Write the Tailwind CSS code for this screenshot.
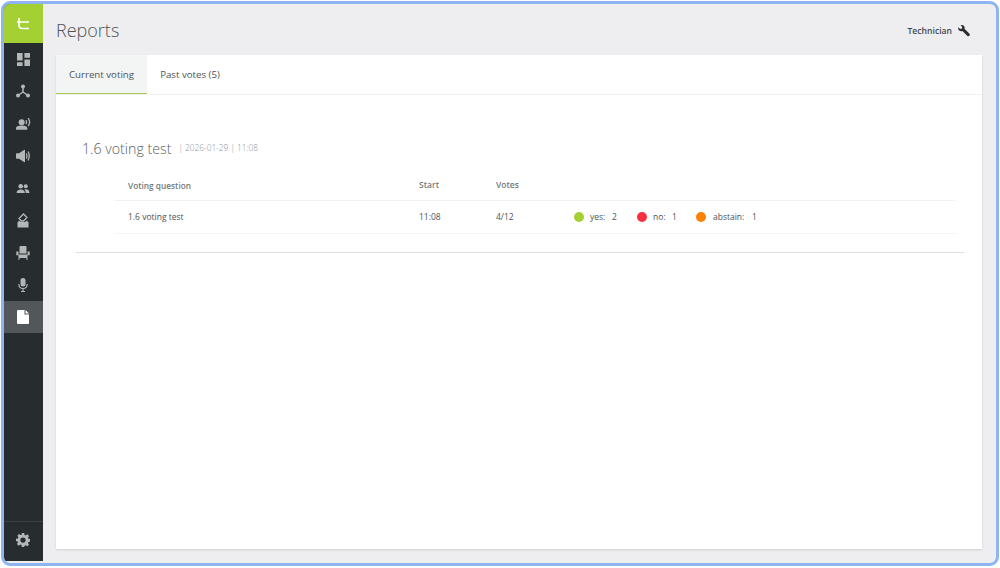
<!DOCTYPE html>
<html lang="en">
<head>
    <meta charset="UTF-8">
    <title>Reports</title>
    <script src="https://cdn.jsdelivr.net/npm/@tailwindcss/browser@4"></script>
</head>
<body class="bg-white font-['Open_Sans',sans-serif]">
    <div class="w-[1000px] h-[568px] pl-px pr-px pt-px pb-[2px] overflow-hidden">
        <div class="w-full h-full flex border-[3px] border-[#8fb4f2] rounded-[9px] overflow-hidden bg-[#eeeef0]">
            <!-- Sidebar -->
            <aside class="w-[39px] shrink-0 mb-[2px] bg-[#272c2f] flex flex-col">
                <div class="h-[39px] pr-px bg-[#a5d034] flex items-center justify-center">
                    <svg class="w-[14px] h-[12px]" viewBox="0 0 14 12" fill="none" stroke="#fff" stroke-width="1.700"><path d="M3 0v7q0 3.500 3.500 3.500H13M1 4h12"/></svg>
                </div>
                <nav class="flex flex-col text-[#b4b7b8]">
                    <div class="h-[32.25px] pr-px flex items-center justify-center">
                        <svg class="w-[13px] h-[13px]" viewBox="0 0 14 14" fill="currentColor"><path d="M0 0h6v8H0zM8 0h6v5H8zM0 10h6v4H0zM8 7h6v7H8z"/></svg>
                    </div>
                    <div class="h-[32.25px] pr-px flex items-center justify-center">
                        <svg class="w-[14px] h-[14px]" viewBox="0 0 14 14" fill="currentColor" stroke="currentColor"><circle cx="7" cy="2.500" r="2" stroke="none"/><circle cx="2" cy="11.500" r="2" stroke="none"/><circle cx="12" cy="11.500" r="2" stroke="none"/><path d="M7 3v5M7 8l-5 3.500M7 8l5 3.500" fill="none" stroke-width="1.500"/></svg>
                    </div>
                    <div class="h-[32.25px] pr-px flex items-center justify-center">
                        <svg class="w-[15px] h-[14px]" viewBox="0 0 16 14" fill="currentColor"><circle cx="6" cy="5" r="3.200"/><path d="M0 13v-1.500q0-3 6-3t6 3V13z"/><path d="M10.500 3q1.500 2 0 4M13 .8q3 4.200 0 8.400" fill="none" stroke="currentColor" stroke-width="1.400"/></svg>
                    </div>
                    <div class="h-[32.25px] pr-px flex items-center justify-center">
                        <svg class="w-[14px] h-[14px]" viewBox="0 0 14 14" fill="currentColor"><path d="M0 5q0-.7.7-.7H3L8 1q1-.5 1 .5v11q0 1-1 .5L3 9.700H.7Q0 9.700 0 9z"/><path d="M10.300 4.500q1.300 2.500 0 5M12 2.500q2.500 4.500 0 9" fill="none" stroke="currentColor" stroke-width="1.300"/></svg>
                    </div>
                    <div class="h-[32.25px] pr-px flex items-center justify-center">
                        <svg class="w-[14px] h-[11px]" viewBox="0 0 14 12" fill="currentColor"><circle cx="4.500" cy="3.500" r="2.500"/><circle cx="10" cy="3.500" r="2.200"/><path d="M0 11q0-4 4.500-4T9 11zM10 11q0-3-1.500-4 5.500-1 5.500 4z"/></svg>
                    </div>
                    <div class="h-[32.25px] pr-px flex items-center justify-center">
                        <svg class="w-[14px] h-[15px]" viewBox="0 0 14 15" fill="currentColor"><path d="M1.500 9v5.500h11V9L10 7.500l-.5 1.500h-5L4 7.500z"/><path d="M7.500 1l3.500 3.500-3.500 3.500h-2L3 5.500z" fill="none" stroke="currentColor" stroke-width="1.300"/></svg>
                    </div>
                    <div class="h-[32.25px] pr-px flex items-center justify-center">
                        <svg class="w-[14px] h-[14px]" viewBox="0 0 14 14" fill="currentColor"><path d="M4.500 0h5q1 0 1 1v6.500h-7V1q0-1 1-1zM.3 5.500h2.200v3.200H3V8.500h8v.2h.5V5.500h2.200v3.700h-2.200V14h-1v-2H3.500v2h-1V9.200H.3zM3.500 9.700h7v1.300h-7z"/></svg>
                    </div>
                    <div class="h-[32.25px] pr-px flex items-center justify-center">
                        <svg class="w-[10px] h-[14px]" viewBox="0 0 10 14" fill="currentColor"><rect x="2.500" y="0" width="5" height="8.500" rx="2.500"/><path d="M.8 6q0 4.500 4.200 4.500T9.200 6M5 10.500V13M3 13.500h4" fill="none" stroke="currentColor" stroke-width="1.200"/></svg>
                    </div>
                    <div class="h-[32.25px] pr-px bg-[#545759] flex items-center justify-center text-white">
                        <svg class="w-[12px] h-[14px]" viewBox="0 0 12 14" fill="currentColor"><path d="M1 0h6.500v4.500H12V13q0 1-1 1H1q-1 0-1-1V1q0-1 1-1zM8.500 0 12 3.500H8.500z"/></svg>
                    </div>
                </nav>
                <div class="mt-auto h-10 pb-[3px] pr-px border-t border-[#3b4043] flex items-center justify-center text-[#b4b7b8]">
                    <svg class="w-[14px] h-[14px]" viewBox="0 0 24 24" fill="currentColor"><path fill-rule="evenodd" d="M10 0h4l.7 3.300 1.900.8L19.500 2.300l2.800 2.800-1.800 2.900.8 1.900 3.300.7v4l-3.300.7-.8 1.900 1.800 2.900-2.800 2.800-2.900-1.800-1.900.8L14 24h-4l-.7-3.300-1.900-.8-2.900 1.800-2.800-2.800 1.800-2.900-.8-1.900L0 14v-4l3.300-.7.8-1.900-1.800-2.900 2.800-2.800 2.900 1.800 1.900-.8zM12 7.500a4.500 4.500 0 1 0 0 9 4.500 4.500 0 0 0 0-9z"/></svg>
                </div>
            </aside>

            <!-- Main -->
            <main class="flex-1 flex flex-col pl-[13px] pr-[14px] pb-[14px] min-w-0">
                <header class="h-[51px] pt-[2px] shrink-0 flex items-center justify-between">
                    <h1 class="text-[18px] font-light text-[#4e5356]">Reports</h1>
                    <div class="flex items-center gap-[6px] pr-[12px] pt-[2px] text-[8.600px] font-semibold text-[#44494c]">
                        <span>Technician</span>
                        <svg class="w-3 h-3" viewBox="0 0 12 12" fill="#2b2e30"><path d="M.3 2.300 2.300 4l1.600-.4L4.300 2 2.600.3Q4.800-.4 6 1q1 1.200.5 2.800l5 5q.8 1-.1 2-1 .9-2 .1l-5-5Q2.800 6.500 1.200 5.500 0 4.500.3 2.300z"/></svg>
                    </div>
                </header>

                <section class="flex-1 bg-white shadow-[0_1px_2px_rgba(0,0,0,0.12)]">
                    <div class="flex h-10 border-b border-[#f0f0f0] text-[9.700px] text-[#4e5356]">
                        <div class="w-[91px] h-[39px] pt-[2px] flex items-center justify-center bg-[#f3f5f4] border-b border-[#a9c957]">Current voting</div>
                        <div class="w-[86px] h-[39px] pt-[2px] flex items-center justify-center">Past votes (5)</div>
                    </div>

                    <div class="pl-5 pr-[18px] pt-[43px]">
                        <div class="pl-[6px] flex items-center">
                            <h2 class="text-[14.200px] font-light text-[#5a5f62]">1.6 voting test</h2>
                            <span class="ml-[7px] text-[8.300px] font-light text-[#909497]">| 2026-01-29 | 11:08</span>
                        </div>

                        <div class="ml-[39px] mr-[9px] mt-[8px] text-[8.500px]">
                            <div class="h-[34px] pt-1 flex items-center border-b border-[#f0f0f0] font-semibold text-[#75797c]">
                                <div class="w-[304px] pl-[13px] text-[8.300px]">Voting question</div>
                                <div class="w-[77px]">Start</div>
                                <div>Votes</div>
                            </div>
                            <div class="h-[33px] flex items-center border-b border-[#f3f3f3] text-[#4e5356]">
                                <div class="w-[304px] pl-[13px] font-medium">1.6 voting test</div>
                                <div class="w-[77px]">11:08</div>
                                <div class="w-[78px]">4/12</div>
                                <div class="flex items-center">
                                    <span class="w-[10px] h-[10px] rounded-full bg-[#a5d034]"></span>
                                    <span class="ml-[6px] w-[22px]">yes:</span><span class="w-[25px]">2</span>
                                    <span class="w-[10px] h-[10px] rounded-full bg-[#f5303f]"></span>
                                    <span class="ml-[6px] w-[19px]">no:</span><span class="w-[24px]">1</span>
                                    <span class="w-[10px] h-[10px] rounded-full bg-[#fb8200]"></span>
                                    <span class="ml-[7px] w-[39px]">abstain:</span><span>1</span>
                                </div>
                            </div>
                        </div>

                        <div class="mt-[18px] border-b border-[#dfdfdf]"></div>
                    </div>
                </section>
            </main>
        </div>
    </div>
</body>
</html>
